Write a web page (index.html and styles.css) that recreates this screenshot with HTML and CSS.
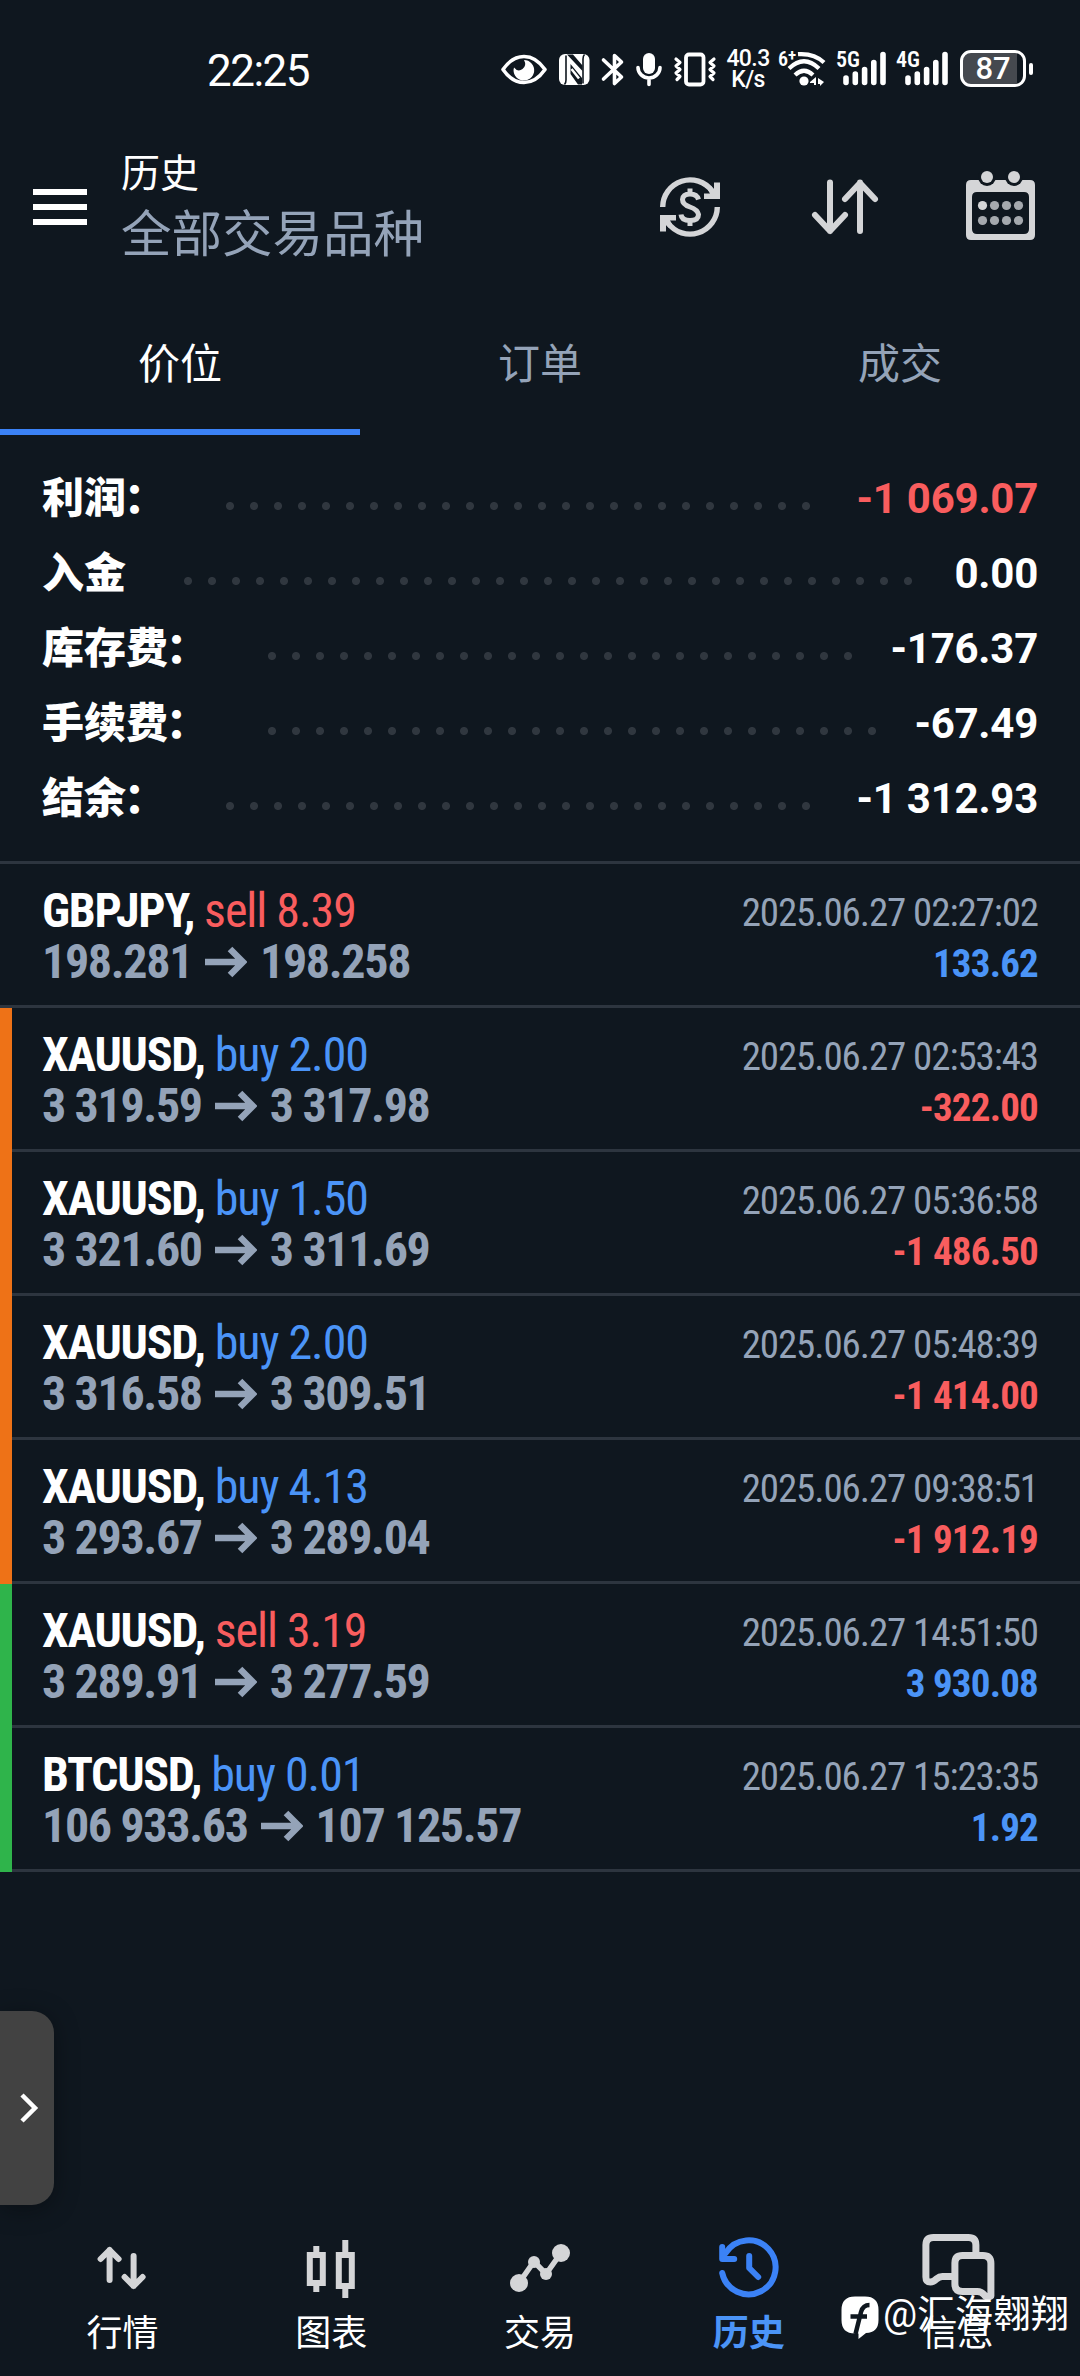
FILE: index.html
```html
<!DOCTYPE html>
<html lang="zh-CN">
<head>
<meta charset="utf-8">
<title>历史</title>
<link rel="stylesheet" href="styles.css">
</head>
<body>
<div class="app">
  <div class="status">
    <span class="clock">22:25</span>
    <div class="status-icons">
      <svg width="52" height="44" viewBox="500 47 52 44"><path d="M503 69.500Q512 56.500 524 56.500T545 69.500Q536 82.500 524 82.500T503 69.500Z" fill="none" stroke="#fff" stroke-width="3.600" stroke-linejoin="round"/><path d="M524 60a10.300 10.300 0 1 1-10 7.500q4 5 8.500 1.500t1.500-9Z" fill="#fff"/></svg>
      <svg width="44" height="44" viewBox="552 47 44 44"><rect x="559" y="54" width="30.500" height="31" rx="6" fill="#fff"/><path d="M566 55.500V80q0 3-1.500 4.500M583 83.500V59q0-3 1.500-4.500" fill="none" stroke="#0f171f" stroke-width="1.600"/><path d="M567 54.500 573 54.500 582.500 65.500V71ZM570.500 64 582 78V84.500H578L570.500 74Z" fill="#0f171f"/><path d="M571.500 69 579 78.500" stroke="#fff" stroke-width="2.500"/></svg>
      <svg width="34" height="44" viewBox="596 47 34 44"><path d="M603.500 60 621.500 77 614.500 83.500V55.500L621.500 62 603.500 79" fill="none" stroke="#fff" stroke-width="3.600" stroke-linejoin="round" stroke-linecap="round"/></svg>
      <svg width="38" height="44" viewBox="630 47 38 44"><rect x="643" y="53" width="12" height="21" rx="6" fill="#fff"/><path d="M638 67.500a11 10.500 0 0 0 22 0M649 78v6.500" fill="none" stroke="#fff" stroke-width="3.600" stroke-linecap="round"/></svg>
      <svg width="54" height="44" viewBox="668 47 54 44"><rect x="686" y="54.500" width="17.500" height="30" rx="3" fill="none" stroke="#fff" stroke-width="3.800"/><path d="m676 59 4 3.500-4 3.500 4 3.500-4 3.500 4 3.500-3 3M714 59l-4 3.500 4 3.500-4 3.500 4 3.500-4 3.500 3 3" fill="none" stroke="#fff" stroke-width="3.200" stroke-linejoin="round" stroke-linecap="round"/></svg>
      <div class="speed"><span>40.3</span><span>K/s</span></div>
      <div class="net wifi"><span>6<sup>+</sup></span>
        <svg width="58" height="44" viewBox="774 47 58 44"><g fill="none" stroke="#fff" stroke-width="4.200"><path d="M798 54.200Q814 53 824 62.500"/><path d="M789 68.500q15-14.500 30 0"/><path d="M795 75q9-8.500 18 0" /></g><circle cx="804" cy="81" r="4.600" fill="#fff"/><path d="m810 82 6-5v8h-2v-2h-4ZM818 78l6 4-4 4v-2h-2Z" fill="#fff"/></svg></div>
      <div class="net"><span>5G</span>
        <svg width="60" height="44" viewBox="832 47 60 44"><path d="M846 82.500V78M855.300 82.500V74M864.600 82.500V69.500M873.800 82.500V62.500M883 82.500V54.500" stroke="#fff" stroke-width="5.600" stroke-linecap="round"/></svg></div>
      <div class="net"><span>4G</span>
        <svg width="62" height="44" viewBox="892 47 62 44"><path d="M908 82.500V78M917.300 82.500V74M926.600 82.500V69.500M935.800 82.500V62.500M945 82.500V54.500" stroke="#fff" stroke-width="5.600" stroke-linecap="round"/></svg></div>
      <div class="battery"><span class="cell">87</span><i></i></div>
    </div>
  </div>

  <header class="header">
    <div class="burger"><i></i><i></i><i></i></div>
    <div class="titles"><h1>历史</h1><p>全部交易品种</p></div>
    <div class="tools">
      <svg width="72" height="76" viewBox="654 169 72 76"><g fill="none" stroke="#d4d5d7" stroke-width="5.400"><path d="M662.700 207A27.300 27.300 0 0 1 712 191"/><path d="M717.300 207A27.300 27.300 0 0 1 668 223"/></g><path d="M714 182.500H720V199H704V193.500H710L708 190l3-4 3 3ZM666 231.500H660V215H676V220.500H670L672 224l-3 4-3-3Z" fill="#d4d5d7"/><path d="M698.500 199.500q-1.500-5.500-8.500-5.500t-7.500 5.500q0 5 7.500 7.500t8.500 7.500q0 6-8.500 6t-9-6M690 188.500V195M690 220v6" fill="none" stroke="#d4d5d7" stroke-width="5"/></svg>
      <svg width="72" height="76" viewBox="810 169 72 76"><path d="M831 182.500V231M816 215 831 231 846 215M861 231V182.500M846 199 861 183 876 199" fill="none" stroke="#d4d5d7" stroke-width="6" stroke-linecap="round" stroke-linejoin="round"/></svg>
      <svg width="72" height="76" viewBox="964 169 72 76"><path fill-rule="evenodd" d="M971 180H1030q5 0 5 5v50q0 5-5 5H971q-5 0-5-5V185q0-5 5-5ZM977 192q-5 0-5 5v32q0 5 5 5h47q5 0 5-5v-32q0-5-5-5Z" fill="#d4d5d7"/><circle cx="987" cy="177" r="9" fill="#0f171f"/><circle cx="1014" cy="177" r="9" fill="#0f171f"/><circle cx="987" cy="177" r="6" fill="#d4d5d7"/><circle cx="1014" cy="177" r="6" fill="#d4d5d7"/><circle cx="982.500" cy="205.500" r="4.600" fill="#d4d5d7"/><g fill="#a5a9ae"><circle cx="994.500" cy="205.500" r="4.600"/><circle cx="1006.500" cy="205.500" r="4.600"/><circle cx="1018.500" cy="205.500" r="4.600"/><circle cx="982.500" cy="220.500" r="4.600"/><circle cx="994.500" cy="220.500" r="4.600"/><circle cx="1006.500" cy="220.500" r="4.600"/><circle cx="1018.500" cy="220.500" r="4.600"/></g></svg>
    </div>
  </header>

  <nav class="tabs"><span class="tab active">价位</span><span class="tab">订单</span><span class="tab">成交</span></nav>

  <section class="summary">
    <div class="sum"><b>利润<em>：</em></b><i class="dots" style="--n:25"></i><span class="neg">-1 069.07</span></div>
    <div class="sum"><b>入金</b><i class="dots" style="--n:31"></i><span>0.00</span></div>
    <div class="sum"><b>库存费<em>：</em></b><i class="dots" style="--n:25"></i><span>-176.37</span></div>
    <div class="sum"><b>手续费<em>：</em></b><i class="dots" style="--n:26"></i><span>-67.49</span></div>
    <div class="sum"><b>结余<em>：</em></b><i class="dots" style="--n:25"></i><span>-1 312.93</span></div>
  </section>

  <svg width="0" height="0" class="defs"><symbol id="arrow" viewBox="0 0 42 32"><path d="M0 16H38M25 3 38 16 25 29" fill="none" stroke="#94a3b8" stroke-width="6.500"/></symbol></svg>
  <main class="trades">
    <div class="trade"><div class="left"><p class="sym"><b>GBPJPY,</b> <span class="neg">sell 8.39</span></p><p class="price">198.281<svg><use href="#arrow"/></svg>198.258</p></div><div class="right"><time>2025.06.27 02:27:02</time><b class="pos">133.62</b></div></div>
    <div class="trade orange"><div class="left"><p class="sym"><b>XAUUSD,</b> <span class="pos">buy 2.00</span></p><p class="price">3 319.59<svg><use href="#arrow"/></svg>3 317.98</p></div><div class="right"><time>2025.06.27 02:53:43</time><b class="neg">-322.00</b></div></div>
    <div class="trade orange"><div class="left"><p class="sym"><b>XAUUSD,</b> <span class="pos">buy 1.50</span></p><p class="price">3 321.60<svg><use href="#arrow"/></svg>3 311.69</p></div><div class="right"><time>2025.06.27 05:36:58</time><b class="neg">-1 486.50</b></div></div>
    <div class="trade orange"><div class="left"><p class="sym"><b>XAUUSD,</b> <span class="pos">buy 2.00</span></p><p class="price">3 316.58<svg><use href="#arrow"/></svg>3 309.51</p></div><div class="right"><time>2025.06.27 05:48:39</time><b class="neg">-1 414.00</b></div></div>
    <div class="trade orange"><div class="left"><p class="sym"><b>XAUUSD,</b> <span class="pos">buy 4.13</span></p><p class="price">3 293.67<svg><use href="#arrow"/></svg>3 289.04</p></div><div class="right"><time>2025.06.27 09:38:51</time><b class="neg">-1 912.19</b></div></div>
    <div class="trade green"><div class="left"><p class="sym"><b>XAUUSD,</b> <span class="neg">sell 3.19</span></p><p class="price">3 289.91<svg><use href="#arrow"/></svg>3 277.59</p></div><div class="right"><time>2025.06.27 14:51:50</time><b class="pos">3 930.08</b></div></div>
    <div class="trade green"><div class="left"><p class="sym"><b>BTCUSD,</b> <span class="pos">buy 0.01</span></p><p class="price">106 933.63<svg><use href="#arrow"/></svg>107 125.57</p></div><div class="right"><time>2025.06.27 15:23:35</time><b class="pos">1.92</b></div></div>
  </main>

  <nav class="bottom">
    <div class="item"><svg width="80" height="84" viewBox="82.400 2228 80 84"><path d="M110 2280V2250M101 2259 110 2250 119 2259M134 2256V2286M125 2277 134 2286 143 2277" fill="none" stroke="#d4d5d7" stroke-width="6" stroke-linecap="round" stroke-linejoin="round"/></svg><span>行情</span></div>
    <div class="item"><svg width="80" height="84" viewBox="291.200 2228 80 84"><path d="M310 2255H323V2283H310ZM339 2255H352V2286H339ZM316.500 2246v9M316.500 2283v9M345.500 2240v15M345.500 2286v12" fill="none" stroke="#d4d5d7" stroke-width="6"/></svg><span>图表</span></div>
    <div class="item"><svg width="80" height="84" viewBox="500 2228 80 84"><path d="M519 2283 534 2261.500 546 2274 561 2253" fill="none" stroke="#d4d5d7" stroke-width="5.500"/><g fill="#d4d5d7"><circle cx="519" cy="2283" r="9"/><circle cx="534" cy="2262" r="6"/><circle cx="546" cy="2274" r="6"/><circle cx="561" cy="2253" r="9"/></g></svg><span>交易</span></div>
    <div class="item on"><svg width="80" height="84" viewBox="708.800 2228 80 84"><path d="M722 2273A27 27 0 1 0 725.500 2253M722 2247V2259H734M749 2256V2268L758 2277" fill="none" stroke="#3b82f6" stroke-width="6" stroke-linecap="round" stroke-linejoin="round"/></svg><span>历史</span></div>
    <div class="item"><svg width="80" height="84" viewBox="917.600 2228 80 84"><path d="M954 2276.500H942Q939 2276.500 936 2279Q933 2282 930 2282Q925.500 2282 925.500 2277V2245Q925.500 2237.500 933 2237.500H968Q975.500 2237.500 975.500 2245V2254M962 2255.500H982.500Q990.500 2255.500 990.500 2263.500V2296Q986 2298 984 2295Q981 2291.500 977 2291.500H962Q954.500 2291.500 954.500 2284V2263Q954.500 2255.500 962 2255.500Z" fill="none" stroke="#d4d5d7" stroke-width="7" stroke-linejoin="round"/></svg><span>信息</span></div>
  </nav>

  <div class="handle"><svg width="20" height="32" viewBox="0 0 20 32"><path d="M2 3 15 16 2 29" fill="none" stroke="#fff" stroke-width="4.500"/></svg></div>
  <div class="mark"><svg width="38" height="44" viewBox="0 0 38 44"><path d="M14 .5H24Q37.500 .5 37.500 14V24Q37.500 36.500 25 37L17.500 43V37.500H14Q.5 37.500 .5 24V14Q.5 .5 14 .5Z" fill="#fff"/><path d="M14.500 38 20 16Q22 9 28.500 9M9.500 20.500H26" fill="none" stroke="#0f171f" stroke-width="4.500"/></svg><span>@汇海翱翔</span></div>
</div>
</body>
</html>
```
FILE: styles.css
```css
* { box-sizing: border-box; margin: 0; padding: 0; }
body { background: #0f171f; color: #fff; font-family: Roboto, "Noto Sans CJK SC", sans-serif; }
i { font-style: normal; }
svg { display: block; flex: none; }
.app { position: relative; width: 1080px; height: 2376px; display: flex; flex-direction: column; overflow: hidden; }
.defs { position: absolute; }

.status { height: 140px; padding: 47px 0 0 207px; display: flex; align-items: flex-start; }
.clock { width: 293px; font-size: 44px; line-height: 48px; letter-spacing: -1.500px; }
.status-icons { display: flex; height: 44px; }
.speed { width: 52px; padding-top: 2px; display: flex; flex-direction: column; align-items: center; font-size: 23px; line-height: 20.500px; font-weight: 500; letter-spacing: -.6px; }
.net { position: relative; }
.net span { position: absolute; left: 4px; top: 3px; font-size: 22px; line-height: 20px; font-weight: 600; font-stretch: 80%; }
.wifi span { font-size: 20px; top: 2px; }
.wifi sup { font-size: 17px; line-height: 8px; vertical-align: 5px; }
.battery { display: flex; align-items: center; gap: 3px; padding-left: 6px; height: 43px; }
.cell { width: 66px; height: 37px; border: 3px solid #fff; border-radius: 11px; background: linear-gradient(90deg, #45494f 54px, #0f171f 54px); text-align: center; font-size: 31px; line-height: 32px; font-weight: 500; }
.battery i { width: 4px; height: 12px; border-radius: 2px; background: #fff; }

.header { height: 134px; padding: 0 44px 0 33px; display: flex; align-items: center; }
.burger { width: 88px; display: flex; flex-direction: column; gap: 9px; }
.burger i { width: 54px; height: 6px; background: #fff; }
.titles { width: 533px; }
.titles h1 { font-size: 39px; line-height: 54px; font-weight: 400; }
.titles p { font-size: 50.500px; line-height: 67px; color: #94a3b8; }
.tools { flex: 1; display: flex; justify-content: space-between; }

.tabs { height: 161px; display: flex; }
.tab { flex: 1; padding-top: 66px; text-align: center; font-size: 42px; line-height: 50px; color: #94a3b8; }
.tab.active { color: #fff; border-bottom: 6px solid #3b82f6; }

.summary { padding: 26px 42px 25px; border-bottom: 3px solid #2d353f; height: 429px; }
.sum { height: 75px; display: flex; align-items: center; font-size: 42px; line-height: 75px; font-weight: 700; }
.sum em { font-style: normal; margin: 0 2px 0 -2px; }
.sum span { margin-left: auto; letter-spacing: -.25px; }
.dots { width: calc(var(--n) * 24px); height: 10px; margin: 15px 0 0 50px; background: radial-gradient(circle at center, #30373f 3.500px, transparent 4.500px) 0 0 / 24px 10px; }
.neg { color: #f95d5e; }
.pos { color: #4b94f7; }

.trade { height: 144px; display: flex; justify-content: space-between; padding: 0 42px; border-bottom: 3px solid #2d353f; line-height: 51px; font-stretch: 75%; }
.orange, .green { padding-left: 30px; border-bottom: 0; border-left: 12px solid #ee7217; background: linear-gradient(#2d353f, #2d353f) 0 100% / 100% 3px no-repeat; }
.green { border-left-color: #2fb44b; }
.left { padding-top: 21px; font-size: 48px; letter-spacing: -1.050px; }
.sym b { letter-spacing: -1.300px; }
.price { display: flex; align-items: center; font-weight: 700; color: #94a3b8; white-space: pre; letter-spacing: -1.350px; }
.price svg { width: 42px; height: 32px; margin: 0 13px; }
.right { padding-top: 24px; display: flex; flex-direction: column; align-items: flex-end; font-size: 39px; letter-spacing: -1.100px; }
.right time { color: #94a3b8; }
.right b { letter-spacing: -.8px; }

.bottom { margin-top: auto; height: 148px; padding: 0 18px; display: flex; }
.item { flex: 1; display: flex; flex-direction: column; align-items: center; font-size: 36px; line-height: 44px; }
.on { color: #4b94f7; font-weight: 700; }

.handle { position: absolute; left: 0; top: 2011px; width: 54px; height: 194px; border-radius: 0 22px 22px 0; background: #424242; box-shadow: 0 4px 24px rgba(0,0,0,.35); display: flex; align-items: center; padding-left: 20px; }
.mark { position: absolute; left: 841px; top: 2296px; display: flex; gap: 4px; font-size: 38px; line-height: 36px; white-space: nowrap; }
```
